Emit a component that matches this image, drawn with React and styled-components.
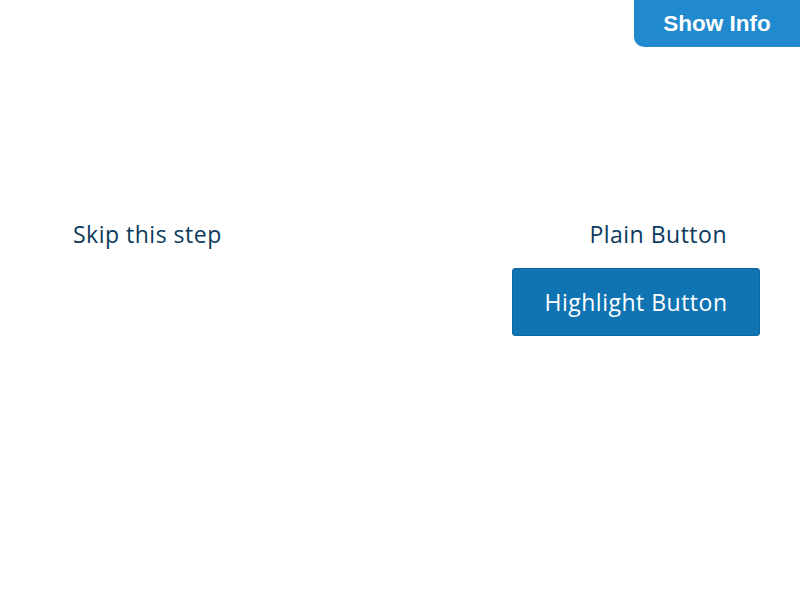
import React from "react";
import styled, { createGlobalStyle } from "styled-components";

const Global = createGlobalStyle`
  html, body { margin: 0; padding: 0; background: #fff; }
  body { font-family: "Open Sans", "Liberation Sans", sans-serif; }
`;

const Page = styled.div`
  position: relative;
  width: 800px;
  height: 600px;
  box-sizing: border-box;
  padding: 200px 40px 0;
`;

const InfoTab = styled.button`
  position: absolute;
  top: 0;
  right: 0;
  width: 166px;
  height: 47px;
  border: none;
  border-radius: 0 0 0 10px;
  background: #2189cd;
  color: #fff;
  font-family: "Liberation Sans", Arial, sans-serif;
  font-weight: bold;
  font-size: 22.5px;
  padding: 0;
  cursor: pointer;
`;

const Row = styled.div`
  display: flex;
  justify-content: space-between;
  align-items: flex-start;
`;

const Actions = styled.div`
  display: flex;
  flex-direction: column;
  align-items: flex-end;
`;

const Button = styled.button`
  height: 68px;
  padding: ${(p) => (p.$wide ? "0" : "0 32px")};
  box-sizing: border-box;
  white-space: nowrap;
  font-family: "Open Sans", sans-serif;
  font-size: 23px;
  letter-spacing: 0.5px;
  border-radius: 3px;
  cursor: pointer;
  border: 1px solid ${(p) => (p.$highlight ? "#0d68a2" : "transparent")};
  background: ${(p) => (p.$highlight ? "#1074b3" : "transparent")};
  color: ${(p) => (p.$highlight ? "#fff" : "#0b3a5c")};
  width: ${(p) => (p.$wide ? "248px" : "auto")};
`;

export default function App() {
  return (
    <>
      <Global />
      <Page>
        <InfoTab>Show Info</InfoTab>
        <Row>
          <Button>Skip this step</Button>
          <Actions>
            <Button>Plain Button</Button>
            <Button $highlight $wide>Highlight Button</Button>
          </Actions>
        </Row>
      </Page>
    </>
  );
}
